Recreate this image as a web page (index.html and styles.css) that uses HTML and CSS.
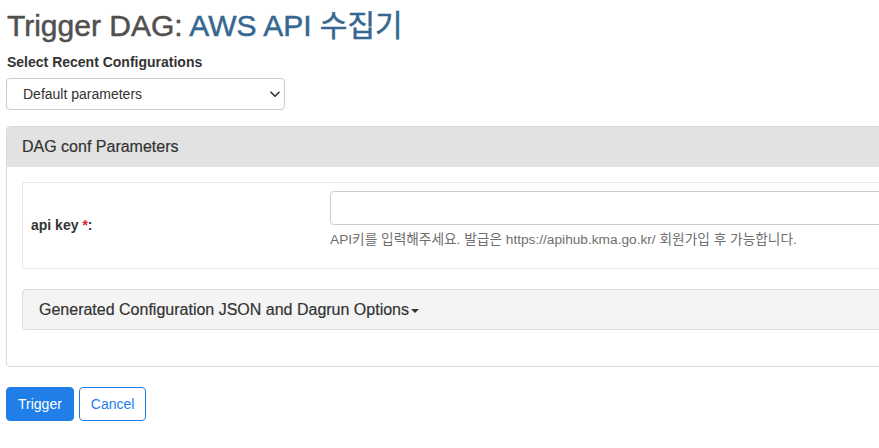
FILE: index.html
```html
<!DOCTYPE html>
<html lang="ko">
<head>
<meta charset="utf-8">
<title>Trigger DAG</title>
<link rel="stylesheet" href="styles.css">
</head>
<body>
<div class="page">
  <h2 class="title">Trigger DAG: <span class="dag-id">AWS API 수집기</span></h2>
  <form class="trigger-form">
    <label class="field-label" for="recent">Select Recent Configurations</label>
    <div class="select-wrap">
      <select id="recent" class="select">
        <option>Default parameters</option>
      </select>
      <svg class="chevron" width="10" height="7" viewBox="0 0 10 7"><path d="M1 1.2 L5 5.2 L9 1.2" fill="none" stroke="#333" stroke-width="1.6" stroke-linecap="round" stroke-linejoin="round"/></svg>
    </div>

    <div class="panel">
      <div class="panel-heading">DAG conf Parameters</div>
      <div class="panel-body">
        <table class="params">
          <tr>
            <td class="param-label"><label for="api_key">api key <span class="req">*</span>:</label></td>
            <td class="param-field">
              <input id="api_key" class="input" type="text">
              <span class="help">API키를 입력해주세요. 발급은 https://apihub.kma.go.kr/ 회원가입 후 가능합니다.</span>
            </td>
          </tr>
        </table>
        <div class="collapse-panel">
          <div class="collapse-heading">Generated Configuration JSON and Dagrun Options<span class="caret"></span></div>
        </div>
      </div>
    </div>

    <div class="actions">
      <button type="button" class="btn btn-primary">Trigger</button>
      <button type="button" class="btn btn-outline">Cancel</button>
    </div>
  </form>
</div>
</body>
</html>
```
FILE: styles.css
```css
html, body {
  margin: 0;
  padding: 0;
  background: #fff;
  overflow: hidden;
}
body {
  font-family: "Liberation Sans", Arial, "Noto Sans CJK KR", sans-serif;
  font-size: 14px;
  line-height: 1.42857;
  color: #51504f;
}
.page {
  width: 1150px;
  padding: 0 6px;
}
.title {
  margin: 9px 0 10px 1px;
  font-size: 30px;
  line-height: 33px;
  font-weight: 400;
  color: #51504f;
  -webkit-text-stroke: 0.5px currentColor;
}
.dag-id {
  color: #366791;
}
.trigger-form {
  display: flex;
  flex-direction: column;
  align-items: flex-start;
}
.field-label {
  font-weight: 700;
  font-size: 14px;
  line-height: 20px;
  margin: 0 0 6px 1px;
  color: #333;
}
.select-wrap {
  position: relative;
  width: 279px;
}
.select {
  appearance: none;
  -webkit-appearance: none;
  display: block;
  width: 100%;
  height: 32px;
  padding: 0 30px 0 16px;
  border: 1px solid #ccc;
  border-radius: 4px;
  background: #fff;
  font-family: "Liberation Sans", Arial, sans-serif;
  font-size: 14px;
  color: #333;
}
.chevron {
  position: absolute;
  right: 5px;
  top: 13px;
}
.panel {
  align-self: stretch;
  margin-top: 16px;
  border: 1px solid #d9d9d9;
  border-radius: 4px;
}
.panel-heading {
  background: #e2e2e2;
  padding: 10px 15px;
  font-size: 16px;
  line-height: 19px;
  color: #333;
  border-bottom: 1px solid #e2e2e2;
  border-radius: 3px 3px 0 0;
  -webkit-text-stroke: 0.2px currentColor;
}
.panel-body {
  padding: 15px 15px 16px;
}
.params {
  width: 100%;
  border-collapse: collapse;
  border: 1px solid #ebebeb;
  margin-bottom: 20px;
}
.params td {
  padding: 8px;
  vertical-align: middle;
}
.param-label {
  width: 283px;
  font-weight: 700;
  color: #333;
}
.req {
  color: #e02020;
}
.param-field {
  padding-left: 8px;
}
.input {
  display: block;
  box-sizing: border-box;
  width: 100%;
  height: 34px;
  border: 1px solid #ccc;
  border-radius: 4px;
  background: #fff;
  margin: 0;
}
.help {
  display: block;
  margin: 5px 0 10px;
  font-size: 13.7px;
  line-height: 20px;
  color: #6f6f6f;
  font-family: "Liberation Sans", Arial, "Noto Sans CJK KR", sans-serif;
}
.collapse-panel {
  border: 1px solid #dcdcdc;
  border-radius: 4px;
  background: #f4f4f4;
  margin-bottom: 20px;
}
.collapse-heading {
  padding: 10px 16px;
  font-size: 16px;
  line-height: 19px;
  color: #333;
  -webkit-text-stroke: 0.2px currentColor;
}
.caret {
  display: inline-block;
  width: 0;
  height: 0;
  margin-left: 2px;
  vertical-align: middle;
  border-top: 4px solid #333;
  border-left: 4px solid transparent;
  border-right: 4px solid transparent;
}
.actions {
  display: flex;
  gap: 5px;
  margin-top: 20px;
}
.btn {
  height: 34px;
  padding: 0 11px;
  font-family: "Liberation Sans", Arial, sans-serif;
  font-size: 14px;
  border-radius: 4px;
  border: 1px solid #1f7ee7;
  cursor: pointer;
}
.btn-primary {
  background: #1f7ee7;
  color: #fff;
}
.btn-outline {
  background: #fff;
  color: #1f7ee7;
}
```
